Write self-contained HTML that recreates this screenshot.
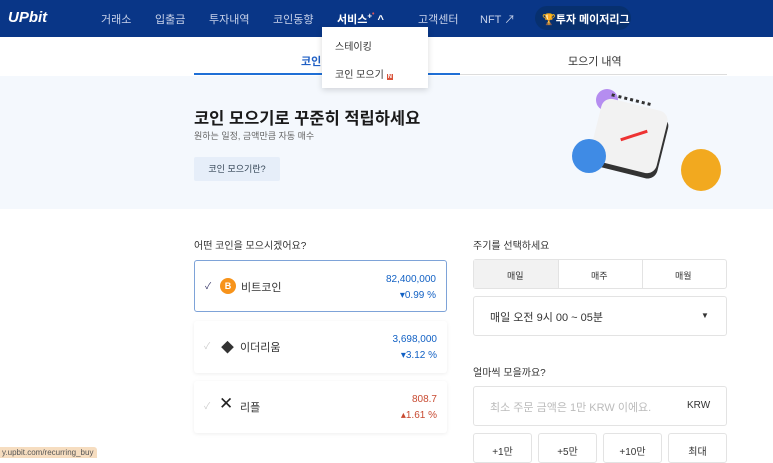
<!DOCTYPE html>
<html><head><meta charset="utf-8"><style>
*{margin:0;padding:0;box-sizing:border-box}
body{width:773px;height:458px;overflow:hidden;background:#fff;font-family:"Liberation Sans","Noto Sans CJK KR",sans-serif;position:relative;color:#333}
.hdr{position:absolute;left:0;top:0;width:773px;height:37px;background:#093687}
.hdr span{position:absolute;top:11px;font-size:11px;color:#c9d3ea}
.logo{left:8px;font-size:15px!important;font-weight:bold;font-style:italic;color:#fff!important;top:9px!important}
.a{position:absolute}
.tab{position:absolute;top:53px;font-size:11px}
.banner{position:absolute;top:76px;left:0;width:773px;height:133px;background:#f4f8fd}
.card{position:absolute;left:194px;width:253px;height:52px;background:#fff;border-radius:3px;box-shadow:0 1px 4px rgba(0,0,0,.07)}
.card .nm{position:absolute;left:46px;top:18px;font-size:11px;color:#333}
.card .p{position:absolute;right:10px;top:11px;font-size:10px;text-align:right;line-height:16px}
.box{position:absolute;border:1px solid #e3e3e3;border-radius:3px;background:#fff;font-size:10px;text-align:center}
</style></head><body>
<div class="hdr">
<span class="logo">UPbit</span>
<span style="left:101px">거래소</span>
<span style="left:155px">입출금</span>
<span style="left:209px">투자내역</span>
<span style="left:273px">코인동향</span>
<span style="left:337px;color:#fff;font-weight:bold">서비스<sup style="font-size:8px">+</sup><b style="color:#e0555b;font-size:7px;vertical-align:top">•</b> ^</span>
<span style="left:418px">고객센터</span>
<span style="left:480px">NFT ↗</span>
<div class="a" style="left:535px;top:6px;width:96px;height:24px;border-radius:12px;background:#07306f"></div>
<span style="left:542px;color:#fff;font-weight:bold"><b style="color:#f5c400">🏆</b>투자 메이저리그</span>
</div>
<div class="tab" style="left:301px;color:#1f5fc4;font-weight:bold">코인</div>
<div class="tab" style="left:568px">모으기 내역</div>
<div class="a" style="left:194px;top:73px;width:266px;height:2px;background:#1f6fd6"></div>
<div class="a" style="left:460px;top:74px;width:267px;height:1px;background:#ddd"></div>
<div class="banner">
<div class="a" style="left:194px;top:29px;font-size:16.5px;font-weight:bold;color:#1a1a1a">코인 모으기로 꾸준히 적립하세요</div>
<div class="a" style="left:194px;top:53px;font-size:9px;color:#666">원하는 일정, 금액만큼 자동 매수</div>
<div class="a" style="left:194px;top:81px;width:86px;height:24px;background:#e6eef9;border-radius:2px;font-size:9px;color:#345;text-align:center;line-height:24px">코인 모으기란?</div>
<div class="a" style="left:596px;top:13px;width:22px;height:22px;border-radius:50%;background:#b58df0"></div>
<div class="a" style="left:595px;top:28px;width:68px;height:64px;background:#f2f2f2;border-radius:10px;transform:rotate(14deg);box-shadow:2px 5px 0 #333"></div>
<div class="a" style="left:610px;top:22px;width:40px;height:12px;border-top:3px dotted #333;transform:rotate(14deg)"></div>
<div class="a" style="left:620px;top:58px;width:28px;height:3px;background:#e33;transform:rotate(-18deg)"></div>
<div class="a" style="left:572px;top:63px;width:34px;height:34px;border-radius:50%;background:#3f8be5"></div>
<div class="a" style="left:681px;top:73px;width:40px;height:42px;border-radius:50%;background:#f2a91f"></div>
</div>
<div class="a" style="left:322px;top:27px;width:106px;height:61px;background:#fff;box-shadow:0 2px 6px rgba(0,0,0,.15);font-size:10px">
<div class="a" style="left:13px;top:11px">스테이킹</div>
<div class="a" style="left:13px;top:39px">코인 모으기 <b style="background:#d9533a;color:#fff;font-size:6px;padding:0 1px">N</b></div>
</div>
<div class="a" style="left:194px;top:237px;font-size:10px">어떤 코인을 모으시겠어요?</div>
<div class="card" style="top:260px;border:1px solid #7ea3d8;box-shadow:none">
<span class="a" style="left:10px;top:18px;color:#336;font-size:9px">✓</span>
<span class="a" style="left:25px;top:17px;width:16px;height:16px;border-radius:50%;background:#f7931a;color:#fff;font-size:9px;text-align:center;line-height:16px;font-weight:bold">B</span>
<span class="nm">비트코인</span>
<div class="p" style="color:#1261c4">82,400,000<br>▾0.99 %</div></div>
<div class="card" style="top:321px">
<span class="a" style="left:10px;top:18px;color:#ccc;font-size:9px">✓</span>
<span class="a" style="left:27px;top:16px;font-size:13px;color:#333">◆</span>
<span class="nm">이더리움</span>
<div class="p" style="color:#1261c4">3,698,000<br>▾3.12 %</div></div>
<div class="card" style="top:381px">
<span class="a" style="left:10px;top:18px;color:#ccc;font-size:9px">✓</span>
<span class="a" style="left:25px;top:13px;font-size:17px;color:#222">✕</span>
<span class="nm">리플</span>
<div class="p" style="color:#c84a31">808.7<br>▴1.61 %</div></div>
<div class="a" style="left:473px;top:237px;font-size:10px">주기를 선택하세요</div>
<div class="box" style="left:473px;top:259px;width:254px;height:30px"></div>
<div class="a" style="left:474px;top:260px;width:84px;height:28px;background:#f2f2f2"></div>
<div class="a" style="left:558px;top:260px;width:1px;height:28px;background:#e3e3e3"></div>
<div class="a" style="left:642px;top:260px;width:1px;height:28px;background:#e3e3e3"></div>
<div class="a" style="left:507px;top:269px;font-size:9px">매일</div>
<div class="a" style="left:591px;top:269px;font-size:9px">매주</div>
<div class="a" style="left:675px;top:269px;font-size:9px">매월</div>
<div class="box" style="left:473px;top:296px;width:254px;height:40px"></div>
<div class="a" style="left:490px;top:309px;font-size:11px">매일 오전 9시 00 ~ 05분</div>
<div class="a" style="left:701px;top:311px;font-size:8px">▼</div>
<div class="a" style="left:473px;top:364px;font-size:10px">얼마씩 모을까요?</div>
<div class="box" style="left:473px;top:386px;width:254px;height:40px"></div>
<div class="a" style="left:490px;top:399px;font-size:11px;color:#bbb">최소 주문 금액은 1만 KRW 이에요.</div>
<div class="a" style="left:687px;top:400px;font-size:10px">KRW</div>
<div class="box" style="left:473px;top:433px;width:59px;height:30px;padding-top:9px">+1만</div>
<div class="box" style="left:538px;top:433px;width:59px;height:30px;padding-top:9px">+5만</div>
<div class="box" style="left:603px;top:433px;width:59px;height:30px;padding-top:9px">+10만</div>
<div class="box" style="left:668px;top:433px;width:59px;height:30px;padding-top:9px">최대</div>
<div class="a" style="left:0;top:447px;width:97px;height:11px;background:#f6ddc0;font-size:8px;color:#555;padding-left:2px;line-height:11px;border-radius:0 3px 0 0">y.upbit.com/recurring_buy</div>
</body></html>
